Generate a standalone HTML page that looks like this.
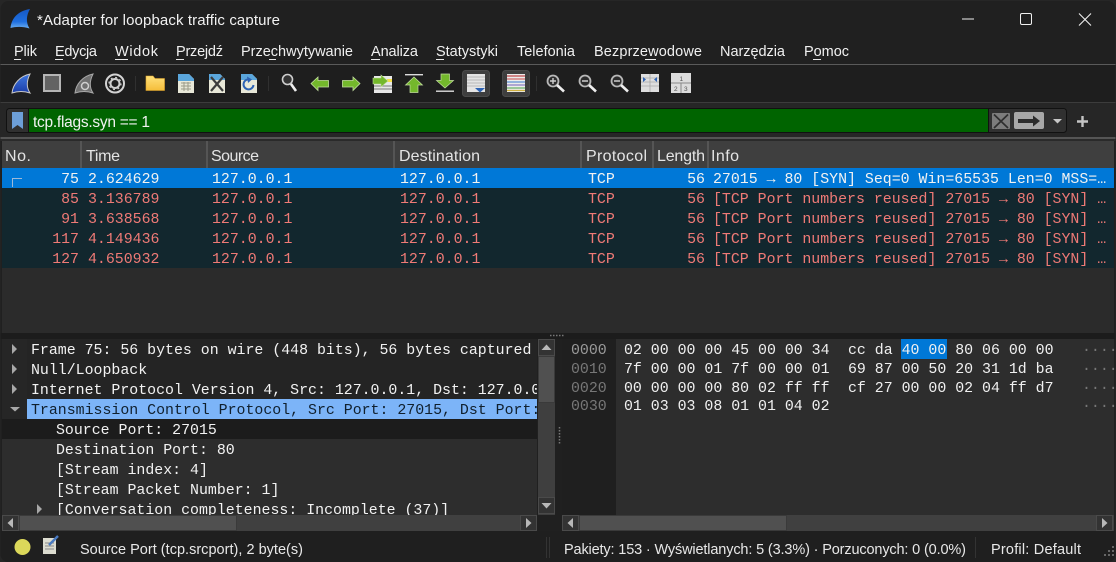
<!DOCTYPE html>
<html><head><meta charset="utf-8"><style>
html,body{margin:0;padding:0;background:#262626;width:1116px;height:562px;overflow:hidden}
svg{display:block}
.s{font-family:"Liberation Sans",sans-serif}
.m{font-family:"Liberation Mono",monospace;font-size:14.9px}
.menu{font-size:14.5px;fill:#f0f0f0}
.hd{font-size:16px;fill:#e4e4e4}
.st{font-size:14.5px;fill:#e8e8e8}
.w{fill:#f2f2f2}.r{fill:#ef7a76}.h{fill:#f0f0f0}.o{fill:#777}
</style></head><body>
<svg width="1116" height="562" viewBox="0 0 1116 562" xmlns="http://www.w3.org/2000/svg">
<defs>
<clipPath id="win"><rect x="0.5" y="1" width="1115" height="561" rx="8"/></clipPath>
<clipPath id="det"><rect x="2" y="339" width="535" height="176"/></clipPath>
<linearGradient id="sh" x1="0" y1="0" x2="0" y2="1"><stop offset="0" stop-color="#3f78e0"/><stop offset="1" stop-color="#1c3da8"/></linearGradient>
<linearGradient id="ti" x1="0" y1="0" x2="0" y2="1"><stop offset="0" stop-color="#1558c4"/><stop offset=".65" stop-color="#1f6fe0"/><stop offset="1" stop-color="#6db0f2"/></linearGradient>
<linearGradient id="fold" x1="0" y1="0" x2="0" y2="1"><stop offset="0" stop-color="#ffe07a"/><stop offset="1" stop-color="#f5bd3a"/></linearGradient>
</defs>
<g clip-path="url(#win)">
<rect width="1116" height="562" fill="#202020"/>
<!-- title -->
<path d="M10.500 28C11.500 18 18 11 30 9C26.500 15 25.500 22 29.500 28.500C23 26.500 16.500 26.500 10.500 28Z" fill="url(#ti)"/>
<text class="s" x="37" y="25" font-size="15" fill="#f2f2f2" textLength="243">*Adapter for loopback traffic capture</text>
<rect x="962" y="18.500" width="12" height="1" fill="#f0f0f0"/>
<rect x="1020.500" y="13.500" width="11" height="11" rx="1.500" fill="none" stroke="#f0f0f0" stroke-width="1"/>
<path d="M1079 13.500L1091 25.500M1091 13.500L1079 25.500" stroke="#f0f0f0" stroke-width="1.100"/>
<!-- menu -->
<g class="s menu">
<text x="14" y="56" textLength="23">Plik</text>
<text x="55" y="56" textLength="42">Edycja</text>
<text x="115" y="56" textLength="43">Widok</text>
<text x="176" y="56" textLength="47">Przejdź</text>
<text x="241" y="56" textLength="112">Przechwytywanie</text>
<text x="371" y="56" textLength="47">Analiza</text>
<text x="436" y="56" textLength="62">Statystyki</text>
<text x="517" y="56" textLength="58">Telefonia</text>
<text x="594" y="56" textLength="108">Bezprzewodowe</text>
<text x="720" y="56" textLength="65">Narzędzia</text>
<text x="804" y="56" textLength="45">Pomoc</text>
</g>
<g fill="#e8e8e8">
<rect x="14" y="59" width="7" height="1"/><rect x="55" y="59" width="8" height="1"/><rect x="115" y="59" width="13" height="1"/><rect x="176" y="59" width="8" height="1"/><rect x="269" y="59" width="7" height="1"/><rect x="371" y="59" width="9" height="1"/><rect x="436" y="59" width="8" height="1"/><rect x="645" y="59" width="11" height="1"/><rect x="813" y="59" width="8" height="1"/>
</g>
<rect x="0" y="64" width="1116" height="1" fill="#5a5a5a"/>
<!-- toolbar -->
<rect y="65" width="1116" height="37" fill="#1e1e1e"/>
<rect y="102" width="1116" height="1" fill="#3c3c3c"/>
<rect y="103" width="1116" height="34" fill="#262626"/>
<!-- start shark -->
<path d="M12 93C13 84 20 76 30 74C27 80 26 87 30 93C24 91 18 91 12 93Z" fill="url(#sh)" stroke="#c8c8c8" stroke-width="1"/>
<!-- stop -->
<rect x="44" y="75" width="16" height="16" fill="#636363" stroke="#b5b5b5" stroke-width="2"/>
<!-- restart -->
<path d="M75 93C76 84 83 76 93 74C90 80 89 87 93 93C87 91 81 91 75 93Z" fill="#707070" stroke="#a8a8a8" stroke-width="1"/>
<circle cx="85" cy="86" r="3.500" fill="none" stroke="#cfcfcf" stroke-width="1.500"/>
<!-- gear -->
<circle cx="115" cy="83.500" r="9" fill="none" stroke="#d4d4d4" stroke-width="2"/>
<circle cx="115" cy="83.500" r="4.500" fill="none" stroke="#cfcfcf" stroke-width="2" />
<circle cx="115" cy="83.500" r="6" fill="none" stroke="#cfcfcf" stroke-width="1.200" stroke-dasharray="2 2.700"/>
<rect x="135" y="76" width="1" height="15" fill="#303030"/>
<!-- folder -->
<path d="M146 76h7l2 2.500h9.500v12h-18.500Z" fill="url(#fold)" stroke="#e6a92c" stroke-width=".6"/>
<!-- file -->
<path d="M178 74h11l5 5v14h-16Z" fill="#e8e8d8"/><path d="M178 74h11l5 5v2h-16Z" fill="#5aa6dc"/>
<path d="M181 83h10M181 86h10M181 89h10M184 82v9M188 82v9" stroke="#9a9a88" stroke-width="1"/>
<!-- close -->
<path d="M209 74h11l5 5v14h-16Z" fill="#e8e8d8"/><path d="M209 74h11l5 5v1h-16Z" fill="#5aa6dc"/>
<path d="M211 77L223 91M223 77L211 91" stroke="#3c3c3c" stroke-width="2.200"/>
<!-- reload -->
<path d="M241 74h11l5 5v14h-16Z" fill="#e8e8d8"/><path d="M241 74h11l5 5v1h-16Z" fill="#5aa6dc"/>
<path d="M253.500 85A5 5 0 1 1 250 79.600" fill="none" stroke="#2d62b4" stroke-width="2"/><path d="M247 76.500l5 3-4 3.500Z" fill="#2d62b4"/>
<rect x="268" y="76" width="1" height="15" fill="#303030"/>
<!-- find -->
<circle cx="287.500" cy="79.500" r="5" fill="#333" stroke="#cfcfcf" stroke-width="1.600"/>
<path d="M291 84L296 91" stroke="#eee" stroke-width="2.600"/>
<!-- left, right -->
<path d="M311 83.500L318 77V80.500H328.500V87H318V90.500Z" fill="#74b82c" stroke="#c4dfa0" stroke-width=".8"/>
<path d="M360 83.500L353 77V80.500H342.500V87H353V90.500Z" fill="#74b82c" stroke="#c4dfa0" stroke-width=".8"/>
<!-- jump -->
<rect x="374" y="76" width="18" height="17" fill="#e8e8e8"/>
<path d="M374 86h18M374 89h18" stroke="#777" stroke-width="1"/>
<rect x="387" y="79" width="5" height="3" fill="#f4e04a"/>
<path d="M388 81L381 75V78H373V84H381V87Z" fill="#74b82c" stroke="#c4dfa0" stroke-width=".6"/>
<!-- top -->
<rect x="405" y="74" width="18" height="1.400" fill="#dcdcdc"/>
<path d="M414 77L422.500 85H418V92.500H410V85H405.500Z" fill="#74b82c" stroke="#c4dfa0" stroke-width=".7"/>
<!-- bottom -->
<rect x="436" y="90.500" width="18" height="1.400" fill="#dcdcdc"/>
<path d="M445 88L453.500 80.500H449.500V74H441V80.500H436.500Z" fill="#74b82c" stroke="#c4dfa0" stroke-width=".7"/>
<!-- autoscroll -->
<rect x="462.500" y="70.500" width="27" height="26" rx="3" fill="#3e3e3e" stroke="#4a4a4a"/>
<rect x="467" y="74" width="18" height="18" fill="#e4e4e4"/>
<path d="M467 77h18M467 80h18M467 83h18M467 86h18" stroke="#aaa" stroke-width=".8"/>
<path d="M475 88h10l-5 4.500Z" fill="#2d62b4"/>
<!-- colorize -->
<rect x="502.500" y="70.500" width="27" height="26" rx="3" fill="#3e3e3e" stroke="#4a4a4a"/>
<rect x="507" y="74" width="18" height="18" fill="#ececec"/>
<path d="M507 76h18" stroke="#c0474a" stroke-width="1.200"/><path d="M507 79h18" stroke="#d06a6a" stroke-width="1.200"/><path d="M507 82h18" stroke="#5b8fd4" stroke-width="1.200"/><path d="M507 85h18" stroke="#8a7cc4" stroke-width="1.200"/><path d="M507 88h18" stroke="#6ab06a" stroke-width="1.200"/><path d="M507 90.500h18" stroke="#d0b040" stroke-width="1.200"/>
<rect x="536" y="76" width="1" height="15" fill="#303030"/>
<!-- zoom -->
<g fill="#2c2c2c" stroke="#b8b8b8" stroke-width="1.800"><circle cx="553" cy="81" r="5.500"/><circle cx="585" cy="81" r="5.500"/><circle cx="617" cy="81" r="5.500"/></g>
<g stroke="#eee" stroke-width="2.600"><path d="M557 85L564 91.500"/><path d="M589 85L596 91.500"/><path d="M621 85L628 91.500"/></g>
<path d="M550 81h6M553 78v6M582 81h6M614 81h6" stroke="#cfcfcf" stroke-width="1.400"/>
<!-- resize -->
<rect x="641" y="74" width="18" height="18" fill="#dedede"/>
<path d="M641 78h18M641 82h18M641 86h18M650 74v18" stroke="#a8a8a8" stroke-width=".8"/>
<path d="M643 77l3 2.500-3 2.500ZM657 77l-3 2.500 3 2.500Z" fill="#2d62b4"/>
<!-- layout -->
<rect x="671" y="73" width="20" height="20" fill="#dcdcdc"/>
<path d="M671 83h20M681 83v10" stroke="#888" stroke-width="1"/>
<g class="s" font-size="6.500" fill="#555"><text x="679.500" y="81">1</text><text x="674" y="91">2</text><text x="684" y="91">3</text></g>
<!-- filter -->
<rect x="6.500" y="108.500" width="1060" height="24" rx="3" fill="#303030" stroke="#111"/>
<rect x="29" y="109" width="959" height="23" fill="#006400"/>
<rect x="28" y="109" width="1" height="23" fill="#111"/><rect x="988" y="109" width="1" height="23" fill="#111"/>
<path d="M12 112h11v17l-5.500-4-5.500 4Z" fill="#6d9fd8"/>
<text class="s" x="33" y="127" font-size="15.500" fill="#f2f2f2" textLength="117">tcp.flags.syn == 1</text>
<rect x="992" y="113" width="18" height="16" rx="1" fill="#7c7c7c"/>
<path d="M994 114.500L1008 128M1008 114.500L994 128" stroke="#2e2e2e" stroke-width="1.700"/>
<rect x="1014" y="112" width="30" height="17" rx="2" fill="#a8a8a8"/>
<path d="M1018 119h15v-3.500l7 5.500-7 5.500v-3.500h-15Z" fill="#2c2c2c"/>
<path d="M1053 119h9l-4.500 4.500Z" fill="#c8c8c8"/>
<path d="M1077 121.500h11M1082.500 116v11" stroke="#c4c4c4" stroke-width="2.400"/>
<rect y="137" width="1116" height="2" fill="#555"/>
<rect y="139" width="1116" height="2" fill="#2a2a2a"/>
<!-- header -->
<rect x="2" y="141" width="1112" height="27" fill="#3f3f3f"/>
<g fill="#555"><rect x="80" y="141" width="2" height="27"/><rect x="206" y="141" width="2" height="27"/><rect x="393" y="141" width="2" height="27"/><rect x="580" y="141" width="2" height="27"/><rect x="652" y="141" width="2" height="27"/><rect x="707" y="141" width="2" height="27"/></g>
<g class="s hd">
<text x="5" y="161" textLength="26">No.</text><text x="86" y="161" textLength="34">Time</text><text x="211" y="161" textLength="48">Source</text><text x="399" y="161" textLength="81">Destination</text><text x="586" y="161" textLength="61">Protocol</text><text x="657" y="161" textLength="48">Length</text><text x="711" y="161" textLength="28">Info</text>
</g>
<!-- list -->
<rect x="2" y="168" width="1112" height="165" fill="#2b2b2b"/>
<rect x="2" y="168" width="1112" height="20" fill="#0078d7"/>
<rect x="2" y="188" width="1112" height="80" fill="#12272e"/>
<path d="M12.500 187V178.500H22" fill="none" stroke="#9db9d8" stroke-width="1"/>
<g class="m w">
<text x="79" y="183" text-anchor="end">75</text><text x="88" y="183">2.624629</text><text x="212" y="183">127.0.0.1</text><text x="400" y="183">127.0.0.1</text><text x="588" y="183">TCP</text><text x="705" y="183" text-anchor="end">56</text><text x="713" y="183">27015 → 80 [SYN] Seq=0 Win=65535 Len=0 MSS=…</text>
</g>
<g class="m r">
<text x="79" y="203" text-anchor="end">85</text><text x="88" y="203">3.136789</text><text x="212" y="203">127.0.0.1</text><text x="400" y="203">127.0.0.1</text><text x="588" y="203">TCP</text><text x="705" y="203" text-anchor="end">56</text><text x="713" y="203">[TCP Port numbers reused] 27015 → 80 [SYN] …</text>
<text x="79" y="223" text-anchor="end">91</text><text x="88" y="223">3.638568</text><text x="212" y="223">127.0.0.1</text><text x="400" y="223">127.0.0.1</text><text x="588" y="223">TCP</text><text x="705" y="223" text-anchor="end">56</text><text x="713" y="223">[TCP Port numbers reused] 27015 → 80 [SYN] …</text>
<text x="79" y="243" text-anchor="end">117</text><text x="88" y="243">4.149436</text><text x="212" y="243">127.0.0.1</text><text x="400" y="243">127.0.0.1</text><text x="588" y="243">TCP</text><text x="705" y="243" text-anchor="end">56</text><text x="713" y="243">[TCP Port numbers reused] 27015 → 80 [SYN] …</text>
<text x="79" y="263" text-anchor="end">127</text><text x="88" y="263">4.650932</text><text x="212" y="263">127.0.0.1</text><text x="400" y="263">127.0.0.1</text><text x="588" y="263">TCP</text><text x="705" y="263" text-anchor="end">56</text><text x="713" y="263">[TCP Port numbers reused] 27015 → 80 [SYN] …</text>
</g>
<!-- splitter -->
<rect y="333" width="1116" height="6" fill="#1c1c1c"/>
<path d="M550 335.500h14" stroke="#777" stroke-width="1.500" stroke-dasharray="1.500 1.500"/>
<!-- details -->
<rect x="2" y="339" width="535" height="176" fill="#2d2d2d"/>
<rect x="2" y="339" width="535" height="60" fill="#242424"/>
<rect x="2" y="339" width="25" height="80" fill="#262626"/>
<rect x="27" y="399" width="510" height="20" fill="#7cb4f8"/>
<rect x="2" y="419" width="535" height="20" fill="#1c1c1c"/>
<g clip-path="url(#det)">
<path d="M12 344l5 5-5 5ZM12 364l5 5-5 5ZM12 384l5 5-5 5ZM37 504l5 5-5 5Z" fill="#a8a8a8"/>
<path d="M10 407h10l-5 4.500Z" fill="#a8a8a8"/>
<g class="m w">
<text x="31" y="354">Frame 75: 56 bytes on wire (448 bits), 56 bytes captured</text>
<text x="31" y="374">Null/Loopback</text>
<text x="31" y="394">Internet Protocol Version 4, Src: 127.0.0.1, Dst: 127.0.0.1</text>
<text x="31" y="414" style="fill:#10202e">Transmission Control Protocol, Src Port: 27015, Dst Port: 80</text>
<text x="56" y="434">Source Port: 27015</text>
<text x="56" y="454">Destination Port: 80</text>
<text x="56" y="474">[Stream index: 4]</text>
<text x="56" y="494">[Stream Packet Number: 1]</text>
<text x="56" y="514">[Conversation completeness: Incomplete (37)]</text>
</g>
</g>
<!-- v scrollbar -->
<rect x="538" y="339" width="17" height="176" fill="#3f3f3f"/>
<rect x="538.500" y="339.500" width="16" height="16" fill="#333" stroke="#4a4a4a"/>
<rect x="538.500" y="356.500" width="16" height="46" fill="#505050" stroke="#3a3a3a"/>
<rect x="538.500" y="497.500" width="16" height="16" fill="#333" stroke="#4a4a4a"/>
<path d="M541.500 350h10l-5-5.500Z" fill="#b8b8b8"/><path d="M541.500 503h10l-5 5.500Z" fill="#b8b8b8"/>
<!-- h scrollbars -->
<rect x="2" y="515" width="535" height="16" fill="#404040"/>
<rect x="537" y="515" width="18" height="16" fill="#202020"/>
<rect x="2.500" y="515.500" width="16" height="15" fill="#333" stroke="#4a4a4a"/>
<rect x="19.500" y="515.500" width="217" height="15" fill="#505050" stroke="#3a3a3a"/>
<rect x="520.500" y="515.500" width="16" height="15" fill="#333" stroke="#4a4a4a"/>
<path d="M13 518l-5.500 5 5.500 5ZM526 518l5.500 5-5.500 5Z" fill="#b8b8b8"/>
<rect x="555" y="339" width="7" height="192" fill="#202020"/>
<path d="M559.500 427v18" stroke="#777" stroke-width="1.500" stroke-dasharray="1.500 1.500"/>
<!-- hex -->
<rect x="562" y="339" width="54" height="176" fill="#1f1f1f"/>
<rect x="616" y="339" width="498" height="176" fill="#2d2d2d"/>
<rect x="901" y="339" width="46" height="20" fill="#0078d7"/>
<g class="m">
<text x="571" y="354" style="fill:#9a9a9a">0000</text><text x="571" y="373" class="o">0010</text><text x="571" y="392" class="o">0020</text><text x="571" y="410" class="o">0030</text>
<g class="h">
<text x="624" y="354">02 00 00 00 45 00 00 34</text><text x="848" y="354">cc da 40 00 80 06 00 00</text>
<text x="624" y="373">7f 00 00 01 7f 00 00 01</text><text x="848" y="373">69 87 00 50 20 31 1d ba</text>
<text x="624" y="392">00 00 00 00 80 02 ff ff</text><text x="848" y="392">cf 27 00 00 02 04 ff d7</text>
<text x="624" y="410">01 03 03 08 01 01 04 02</text>
</g>
<text x="1082" y="354" style="fill:#777">····</text><text x="1082" y="373" style="fill:#777">····</text><text x="1082" y="392" style="fill:#777">····</text><text x="1082" y="410" style="fill:#777">····</text>
</g>
<rect x="562" y="515" width="552" height="16" fill="#404040"/>
<rect x="562.500" y="515.500" width="16" height="15" fill="#333" stroke="#4a4a4a"/>
<rect x="579.500" y="515.500" width="207" height="15" fill="#505050" stroke="#3a3a3a"/>
<rect x="1096.500" y="515.500" width="16" height="15" fill="#333" stroke="#4a4a4a"/>
<path d="M573 518l-5.500 5 5.500 5ZM1102 518l5.500 5-5.500 5Z" fill="#b8b8b8"/>
<!-- status -->
<rect y="531" width="1116" height="31" fill="#1f1f1f"/>
<circle cx="22.500" cy="547" r="8" fill="#dcd85a"/>
<path d="M43 538h13v16h-13Z" fill="#dcdcd0"/><path d="M45 543h9M45 546h9M45 549h9" stroke="#888" stroke-width="1"/>
<path d="M49 545L58 536" stroke="#4a7ac0" stroke-width="2.500"/>
<g class="s st">
<text x="80" y="554" textLength="223">Source Port (tcp.srcport), 2 byte(s)</text>
<text x="564" y="554" textLength="402">Pakiety: 153 · Wyświetlanych: 5 (3.3%) · Porzuconych: 0 (0.0%)</text>
<text x="991" y="554" textLength="90">Profil: Default</text>
</g>
<g fill="#333"><rect x="546" y="537" width="1" height="21"/><rect x="549" y="537" width="1" height="21"/><rect x="975" y="537" width="1" height="21"/></g>
<g fill="#666"><rect x="1112" y="546" width="2" height="2"/><rect x="1108" y="550" width="2" height="2"/><rect x="1112" y="550" width="2" height="2"/><rect x="1104" y="554" width="2" height="2"/><rect x="1108" y="554" width="2" height="2"/><rect x="1112" y="554" width="2" height="2"/></g>
</g>
</svg>
</body></html>
